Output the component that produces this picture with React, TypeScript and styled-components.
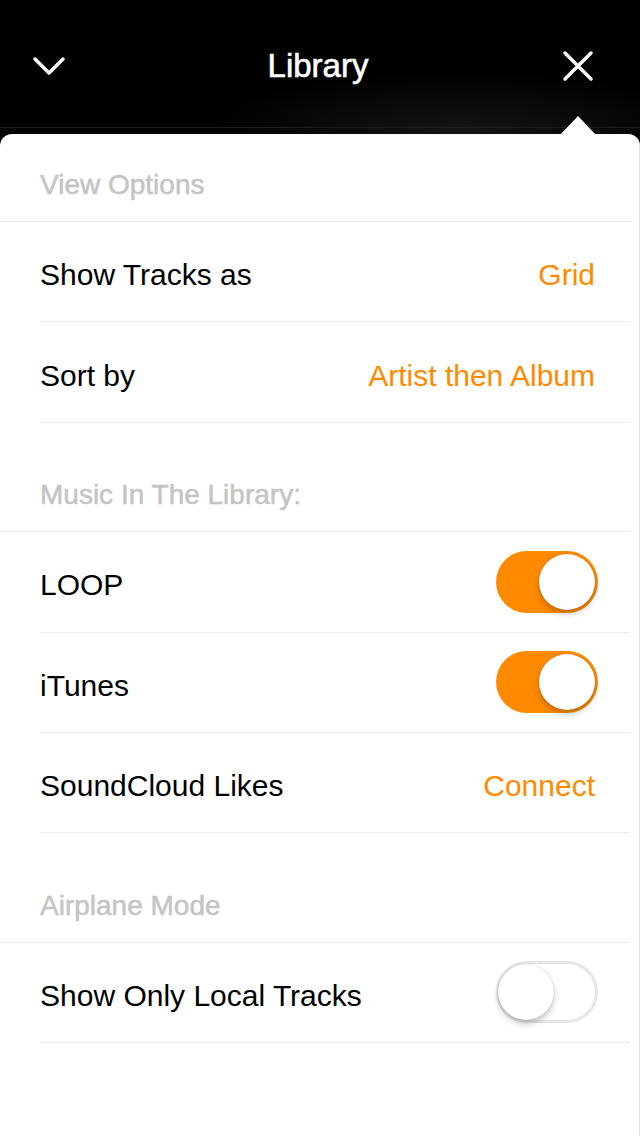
import React from "react";
import styled, { createGlobalStyle } from "styled-components";

const Global = createGlobalStyle`
  html, body { margin: 0; padding: 0; background: #000; }
  body { font-family: "Liberation Sans", Arial, sans-serif; -webkit-font-smoothing: antialiased; }
  * { box-sizing: border-box; }
`;

const Screen = styled.div`
  width: 640px;
  height: 1136px;
  background: radial-gradient(ellipse 260px 60px at 460px 132px, #131415 0%, #000 100%);
  display: flex;
  flex-direction: column;
  overflow: hidden;
`;

const Header = styled.header`
  height: 128px;
  flex: none;
  display: grid;
  grid-template-columns: 100px 1fr 100px;
  align-items: center;
  padding-top: 4px;
  border-bottom: 1px solid #1d1d1d;
`;

const IconButton = styled.button<{ $align: "left" | "right" }>`
  background: none;
  border: none;
  padding: 0;
  height: 60px;
  display: flex;
  align-items: center;
  justify-content: ${(p) => (p.$align === "left" ? "flex-start" : "flex-end")};
  padding-left: ${(p) => (p.$align === "left" ? "32px" : "0")};
  padding-right: ${(p) => (p.$align === "right" ? "46px" : "0")};
  color: #fff;
`;

const Title = styled.h1`
  margin: 0;
  text-align: center;
  color: #fff;
  font-size: 33px;
  font-weight: 400;
  -webkit-text-stroke: 0.6px #fff;
  margin-left: -4px;
`;

const Panel = styled.main`
  position: relative;
  margin-top: 6px;
  flex: 1;
  background: #fff;
  border-radius: 12px 12px 0 0;
  box-shadow: inset -1px 0 0 #e2e2e2;
`;

const Caret = styled.div`
  position: absolute;
  top: -18px;
  left: 560px;
  width: 0;
  height: 0;
  border-left: 18px solid transparent;
  border-right: 18px solid transparent;
  border-bottom: 19px solid #fff;
`;

const SectionHeader = styled.div<{ $spaced?: boolean }>`
  height: ${(p) => (p.$spaced ? 109.4 : 88)}px;
  margin-right: 10px;
  padding-left: 40px;
  padding-bottom: 20px;
  display: flex;
  align-items: flex-end;
  color: #c4c4c4;
  font-size: 28px;
  font-weight: 400;
  -webkit-text-stroke: 0.5px #c4c4c4;
  border-bottom: 1px solid #e9e9e9;
`;

const Row = styled.div`
  height: 100.4px;
  margin-left: 40px;
  margin-right: 10px;
  padding-right: 35px;
  display: flex;
  align-items: center;
  justify-content: space-between;
  border-bottom: 1px solid #ececec;
`;

const Label = styled.span`
  font-size: 30px;
  color: #000;
  padding-top: 7px;
`;

const Value = styled.span`
  font-size: 30px;
  color: #ff8a00;
  padding-top: 7px;
`;

const Track = styled.div<{ $on: boolean }>`
  position: relative;
  width: 102px;
  height: 62px;
  margin-right: -3px;
  border-radius: 31px;
  background: ${(p) => (p.$on ? "#ff8a00" : "#fff")};
  border: ${(p) => (p.$on ? "none" : "3px solid #e6e6e6")};
`;

const Knob = styled.div<{ $on: boolean }>`
  position: absolute;
  top: ${(p) => (p.$on ? 3 : 0)}px;
  ${(p) => (p.$on ? "right: 3px;" : "left: -1px;")}
  width: 56px;
  height: 56px;
  border-radius: 50%;
  background: #fff;
  box-shadow: 0 4px 6px rgba(0, 0, 0, 0.22), 0 0 1px rgba(0, 0, 0, 0.3);
`;

const Toggle = ({ on }: { on: boolean }) => (
  <Track $on={on}>
    <Knob $on={on} />
  </Track>
);

export default function App() {
  return (
    <>
      <Global />
      <Screen>
        <Header>
          <IconButton $align="left" aria-label="Collapse">
            <svg width="34" height="22" viewBox="0 0 34 22">
              <path d="M3 4 L17 18 L31 4" fill="none" stroke="#fff" strokeWidth="3.5" strokeLinecap="round" strokeLinejoin="round" />
            </svg>
          </IconButton>
          <Title>Library</Title>
          <IconButton $align="right" aria-label="Close">
            <svg width="32" height="32" viewBox="0 0 32 32">
              <path d="M3 3 L29 29 M29 3 L3 29" fill="none" stroke="#fff" strokeWidth="3.5" strokeLinecap="round" />
            </svg>
          </IconButton>
        </Header>
        <Panel>
          <Caret />
          <SectionHeader>View Options</SectionHeader>
          <Row>
            <Label>Show Tracks as</Label>
            <Value>Grid</Value>
          </Row>
          <Row>
            <Label>Sort by</Label>
            <Value>Artist then Album</Value>
          </Row>
          <SectionHeader $spaced>Music In The Library:</SectionHeader>
          <Row>
            <Label>LOOP</Label>
            <Toggle on />
          </Row>
          <Row>
            <Label>iTunes</Label>
            <Toggle on />
          </Row>
          <Row>
            <Label>SoundCloud Likes</Label>
            <Value>Connect</Value>
          </Row>
          <SectionHeader $spaced>Airplane Mode</SectionHeader>
          <Row>
            <Label>Show Only Local Tracks</Label>
            <Toggle on={false} />
          </Row>
        </Panel>
      </Screen>
    </>
  );
}
